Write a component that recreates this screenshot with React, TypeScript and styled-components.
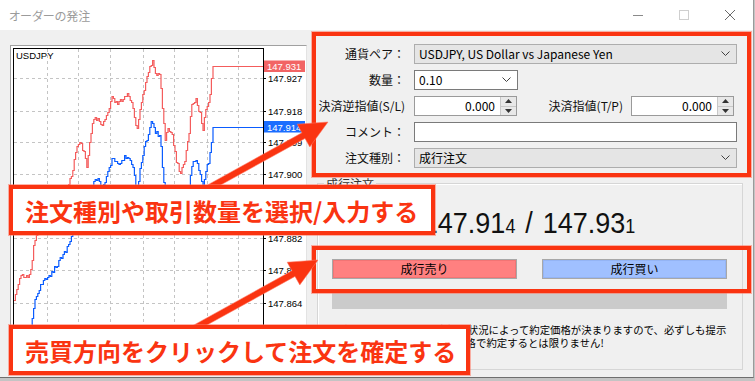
import React from "react";
import styled, { createGlobalStyle } from "styled-components";

const RED = "#fa3411";

const GlobalStyle = createGlobalStyle`
  html, body { margin: 0; padding: 0; }
  body {
    background: #c4c4c4;
    font-family: "Noto Sans CJK JP", "Noto Sans", sans-serif;
    font-size: 12px;
    color: #000;
  }
`;

const Window = styled.div`
  position: relative;
  width: 753px;
  height: 377px;
  background: #f0f0f0;
  border-right: 1px solid #9a9a9a;
  border-bottom: 1px solid #6e6e6e;
  overflow: hidden;
  display: flex;
  flex-direction: column;
`;

const TitleBar = styled.div`
  height: 30px;
  flex-shrink: 0;
  background: #fff;
  display: flex;
  align-items: center;
  padding-left: 9px;
`;

const Title = styled.div`
  flex: 1;
  color: #9b9b9b;
  font-size: 12px;
  font-feature-settings: "palt";
`;

const WinButton = styled.div`
  width: 46px;
  height: 30px;
  display: flex;
  align-items: center;
  justify-content: center;
`;

const Body = styled.div`
  display: flex;
  align-items: flex-start;
  padding-left: 10px;
`;

const ChartPanel = styled.div`
  margin-top: 15px;
  width: 297px;
  height: 323px;
  box-sizing: border-box;
  background: #fff;
  border: 1px solid #a0a0a0;
  border-right-color: #e3e3e3;
  border-bottom-color: #e3e3e3;
  svg { display: block; }
`;

const RightPane = styled.div`
  margin-left: 10px;
  margin-top: 14px;
  width: 426px;
  display: flex;
  flex-direction: column;
`;

const Form = styled.div`
  width: 420px;
  display: grid;
  grid-template-columns: 88px 1fr;
  grid-auto-rows: 20px;
  column-gap: 9px;
  row-gap: 6px;
`;

const Label = styled.div`
  text-align: right;
  line-height: 20px;
  white-space: nowrap;
  color: #111;
`;

const Combo = styled.div<{ $light?: boolean; $width?: number }>`
  position: relative;
  box-sizing: border-box;
  height: 20px;
  width: ${(p) => (p.$width ? `${p.$width}px` : "100%")};
  background: ${(p) => (p.$light ? "#fff" : "#e5e5e5")};
  border: 1px solid ${(p) => (p.$light ? "#7a7a7a" : "#adadad")};
  display: flex;
  align-items: center;
  padding-left: 4px;
  padding-right: 6px;
  line-height: 18px;
  span { flex: 1; white-space: nowrap; }
`;

const Row = styled.div`
  display: flex;
  align-items: center;
`;

const Spin = styled.div`
  box-sizing: border-box;
  width: 103px;
  height: 20px;
  background: #fff;
  border: 1px solid #9a9a9a;
  display: flex;
  span {
    flex: 1;
    text-align: right;
    padding-right: 5px;
    line-height: 18px;
  }
`;

const SpinButtons = styled.div`
  width: 15px;
  display: flex;
  flex-direction: column;
  border-left: 1px solid #c8c8c8;
`;

const SpinCell = styled.div`
  flex: 1;
  background: #e8e8e8;
  display: flex;
  align-items: center;
  justify-content: center;
  & + & { border-top: 1px solid #c8c8c8; }
`;

const InlineLabel = styled(Label)`
  flex: 1;
  margin-right: 8px;
`;

const TextInput = styled.div`
  box-sizing: border-box;
  height: 20px;
  background: #fff;
  border: 1px solid #7a7a7a;
`;

const GroupBox = styled.div`
  position: relative;
  margin-top: 15px;
  height: 187px;
  box-sizing: border-box;
  border: 1px solid #d6d6d6;
  box-shadow: inset 1px 1px 0 #fff;
  padding: 0 15px 0 14px;
  display: flex;
  flex-direction: column;
`;

const Legend = styled.div`
  position: absolute;
  top: -9px;
  left: 6px;
  padding: 0 2px;
  background: #f0f0f0;
  color: #333;
`;

const Price = styled.div`
  margin-top: 20px;
  height: 40px;
  display: flex;
  align-items: center;
  justify-content: center;
`;

const PriceText = styled.div`
  display: inline-block;
  font-family: "Liberation Sans", Arial, sans-serif;
  font-size: 30px;
  line-height: 40px;
  color: #111;
  transform: scaleX(0.9);
  white-space: nowrap;
  small { font-size: 20px; }
  i { font-style: normal; padding: 0 11px; }
`;

const Buttons = styled.div`
  margin-top: 15px;
  display: flex;
  gap: 25px;
`;

const OrderButton = styled.div<{ $color: string; $edge: string }>`
  flex: 1;
  height: 20px;
  box-sizing: border-box;
  border: 1px solid #a8a8a8;
  background: ${(p) => p.$color};
  box-shadow: inset 0 0 0 1px ${(p) => p.$edge};
  text-align: center;
  line-height: 18px;
`;

const StatusBar = styled.div`
  margin-top: 10px;
  height: 20px;
  background: #cbcbcb;
`;

const Notice = styled.div`
  margin-top: 15px;
  font-size: 10.4px;
  line-height: 12.5px;
  text-align: center;
  white-space: nowrap;
`;

const Frame = styled.div<{ $x: number; $y: number; $w: number; $h: number }>`
  position: absolute;
  left: ${(p) => p.$x}px;
  top: ${(p) => p.$y}px;
  width: ${(p) => p.$w}px;
  height: ${(p) => p.$h}px;
  box-sizing: border-box;
  border: 4px solid ${RED};
  box-shadow: 0 0 0 1px rgba(255, 120, 100, 0.55);
`;

const Callout = styled(Frame)`
  background: #fff;
  padding-left: 12px;
  display: flex;
  align-items: center;
  color: ${RED};
  font-weight: 700;
  font-size: 24px;
  white-space: nowrap;
  letter-spacing: 0;
`;

const Overlay = styled.svg`
  position: absolute;
  left: 0;
  top: 0;
`;

const Chevron = ({ color = "#404040" }: { color?: string }) => (
  <svg width="9" height="6" viewBox="0 0 9 6">
    <polyline points="0.5,0.5 4.5,4.5 8.5,0.5" fill="none" stroke={color} strokeWidth="1" />
  </svg>
);

const Tri = ({ up }: { up?: boolean }) => (
  <svg width="7" height="4" viewBox="0 0 7 4">
    <polygon points={up ? "0,4 7,4 3.5,0" : "0,0 7,0 3.5,4"} fill="#333" />
  </svg>
);

const SpinBox = ({ value }: { value: string }) => (
  <Spin>
    <span>{value}</span>
    <SpinButtons>
      <SpinCell>
        <Tri up />
      </SpinCell>
      <SpinCell>
        <Tri />
      </SpinCell>
    </SpinButtons>
  </Spin>
);

// ask price shape, bid is drawn 60px below it
const askKeys: number[][] = [
  [14, 300], [18, 284], [22, 273], [27, 277], [31, 269], [34, 242], [40, 226],
  [50, 214], [60, 200], [68, 186], [72, 173], [76, 150], [80, 143], [84, 151],
  [87, 166], [90, 140], [93, 121], [97, 118], [101, 127], [105, 120], [108, 112],
  [112, 98], [117, 104], [122, 100], [128, 95], [132, 104], [135, 118], [137, 131],
  [140, 108], [143, 92], [146, 82], [149, 70], [152, 60], [155, 73], [160, 74],
  [162, 100], [165, 140], [168, 130], [172, 133], [176, 158], [180, 172], [184, 165],
  [188, 140], [192, 102], [196, 100], [200, 113], [203, 128], [206, 108], [209, 100],
  [211, 84], [213, 66],
];

const keyY = (x: number) => {
  for (let i = 0; i < askKeys.length - 1; i++) {
    const [x0, y0] = askKeys[i];
    const [x1, y1] = askKeys[i + 1];
    if (x >= x0 && x <= x1) return y0 + ((y1 - y0) * (x - x0)) / (x1 - x0);
  }
  return askKeys[askKeys.length - 1][1];
};

const noise = (i: number) => {
  const v = Math.sin(i * 12.9898) * 43758.5453;
  return v - Math.floor(v) - 0.5;
};

const buildLine = (offset: number, endY: number, seed: number) => {
  let d = "";
  let i = 0;
  for (let x = 14; x < 212.5; x += 1.4) {
    const y = Math.round(keyY(x) + offset + noise(i + seed) * 5) + 0.5;
    d += i === 0 ? `M${x.toFixed(1)} ${y}` : ` H${x.toFixed(1)} V${y}`;
    i++;
  }
  return `${d} H213 V${endY} H263`;
};

const gridX = [47, 78, 110, 143, 174, 207, 238];
const levels: [string, number][] = [
  ["147.927", 78], ["147.918", 111], ["147.909", 142], ["147.900", 174],
  ["147.891", 206], ["147.882", 238], ["147.873", 270], ["147.864", 303], ["147.855", 335],
];

const Chart = () => (
  <svg width="295" height="321" viewBox="11 46 295 321">
    <defs>
      <clipPath id="plot">
        <rect x="14" y="49" width="249" height="315" />
      </clipPath>
    </defs>
    <g stroke="#c4c4c4" strokeDasharray="3 3" strokeWidth="1">
      {gridX.map((x) => (
        <line key={x} x1={x + 0.5} y1="49" x2={x + 0.5} y2="364" />
      ))}
      {levels.map(([, y]) => (
        <line key={y} x1="14" y1={y + 0.5} x2="263" y2={y + 0.5} />
      ))}
    </g>
    <g clipPath="url(#plot)" fill="none" strokeWidth="1.2">
      <path d={buildLine(0, 66.5, 3)} stroke="#f45c5c" />
      <path d={buildLine(60, 127.5, 91)} stroke="#0a5cff" />
    </g>
    <rect x="13.5" y="48.5" width="250" height="316" fill="none" stroke="#000" />
    <text x="16" y="59" fontFamily="Liberation Sans, Arial, sans-serif" fontSize="9.5">
      USDJPY
    </text>
    <g fontFamily="Liberation Sans, Arial, sans-serif" fontSize="9.5" fill="#000">
      {levels.map(([label, y]) => (
        <g key={label}>
          <line x1="263" y1={y + 0.5} x2="266" y2={y + 0.5} stroke="#000" />
          <text x="268" y={y + 3.5}>
            {label}
          </text>
        </g>
      ))}
    </g>
    <rect x="264" y="60.5" width="41" height="11.5" fill="#f26464" />
    <text x="267" y="70" fontFamily="Liberation Sans, Arial, sans-serif" fontSize="9.5" fill="#fff">
      147.931
    </text>
    <rect x="264" y="121" width="41" height="11.5" fill="#1a6dff" />
    <text x="267" y="130.5" fontFamily="Liberation Sans, Arial, sans-serif" fontSize="9.5" fill="#fff">
      147.914
    </text>
  </svg>
);

const arrowPoints = (tx: number, ty: number, hx: number, hy: number) => {
  const len = Math.hypot(hx - tx, hy - ty);
  const ux = (hx - tx) / len;
  const uy = (hy - ty) / len;
  const px = -uy;
  const py = ux;
  const shaft = 3.2;
  const headL = 28;
  const headW = 13;
  const bx = hx - ux * headL;
  const by = hy - uy * headL;
  const pts = [
    [tx + px * shaft, ty + py * shaft],
    [bx + px * shaft, by + py * shaft],
    [bx + px * headW, by + py * headW],
    [hx, hy],
    [bx - px * headW, by - py * headW],
    [bx - px * shaft, by - py * shaft],
    [tx - px * shaft, ty - py * shaft],
  ];
  return pts.map(([x, y]) => `${x.toFixed(1)},${y.toFixed(1)}`).join(" ");
};

const App: React.FC = () => {
  return (
    <>
      <GlobalStyle />
      <Window>
        <TitleBar>
          <Title>オーダーの発注</Title>
          <WinButton>
            <svg width="10" height="10" viewBox="0 0 10 10">
              <line x1="0" y1="5.5" x2="10" y2="5.5" stroke="#8a8a8a" />
            </svg>
          </WinButton>
          <WinButton>
            <svg width="10" height="10" viewBox="0 0 10 10">
              <rect x="0.5" y="0.5" width="9" height="9" fill="none" stroke="#cfcfcf" />
            </svg>
          </WinButton>
          <WinButton>
            <svg width="10" height="10" viewBox="0 0 10 10">
              <path d="M0 0 L10 10 M10 0 L0 10" stroke="#6a6a6a" strokeWidth="1" />
            </svg>
          </WinButton>
        </TitleBar>

        <Body>
          <ChartPanel>
            <Chart />
          </ChartPanel>

          <RightPane>
            <Form>
              <Label>通貨ペア：</Label>
              <Combo>
                <span>USDJPY, US Dollar vs Japanese Yen</span>
                <Chevron />
              </Combo>

              <Label>数量：</Label>
              <Combo $light $width={104}>
                <span>0.10</span>
                <Chevron />
              </Combo>

              <Label>決済逆指値(S/L)</Label>
              <Row>
                <SpinBox value="0.000" />
                <InlineLabel>決済指値(T/P)</InlineLabel>
                <SpinBox value="0.000" />
                <div style={{ width: 3 }} />
              </Row>

              <Label>コメント：</Label>
              <TextInput />

              <Label>注文種別：</Label>
              <Combo>
                <span>成行注文</span>
                <Chevron />
              </Combo>
            </Form>

            <GroupBox>
              <Legend>成行注文</Legend>
              <Price>
                <PriceText>
                  147.91<small>4</small>
                  <i>/</i>
                  147.93<small>1</small>
                </PriceText>
              </Price>
              <Buttons>
                <OrderButton $color="#ff8080" $edge="#f27474">成行売り</OrderButton>
                <OrderButton $color="#a0c0ff" $edge="#94b4f4">成行買い</OrderButton>
              </Buttons>
              <StatusBar />
              <Notice>
                成行注文は、その時の市場の状況によって約定価格が決まりますので、必ずしも提示
                <br />
                価格で約定するとは限りません!
              </Notice>
            </GroupBox>
          </RightPane>
        </Body>

        <Frame $x={312} $y={32} $w={439} $h={145} />
        <Frame $x={312} $y={246} $w={439} $h={47} />
        <Overlay width="753" height="377" viewBox="0 0 753 377">
          <g fill={RED} stroke="rgba(255,120,100,0.55)" strokeWidth="1">
            <polygon points={arrowPoints(196, 195, 328, 122)} />
            <polygon points={arrowPoints(186, 333, 318, 260)} />
          </g>
        </Overlay>
        <Callout $x={9} $y={185} $w={426} $h={50}>
          注文種別や取引数量を選択/入力する
        </Callout>
        <Callout $x={9} $y={325} $w={461} $h={50}>
          売買方向をクリックして注文を確定する
        </Callout>
      </Window>
    </>
  );
};

export default App;
